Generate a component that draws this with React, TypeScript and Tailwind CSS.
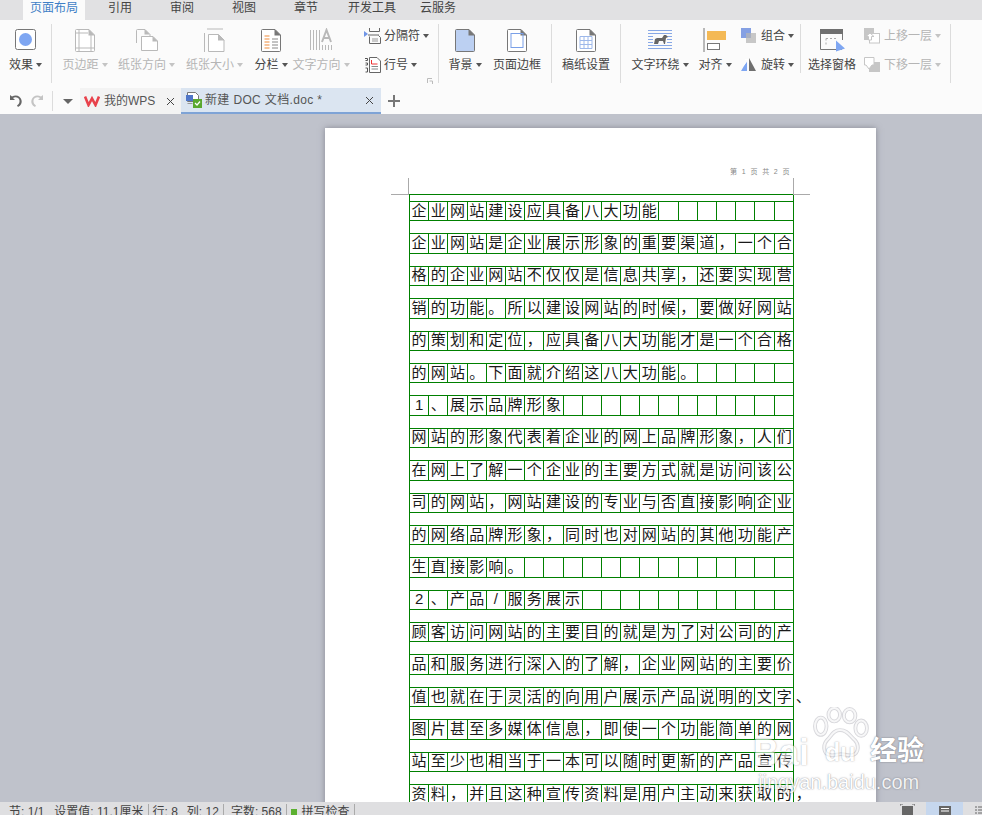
import React from "react";

const FONT = '"Liberation Sans","Noto Sans CJK SC",sans-serif';

const LINES = [
  "企业网站建设应具备八大功能",
  "企业网站是企业展示形象的重要渠道，一个合",
  "格的企业网站不仅仅是信息共享，还要实现营",
  "销的功能。所以建设网站的时候，要做好网站",
  "的策划和定位，应具备八大功能才是一个合格",
  "的网站。下面就介绍这八大功能。",
  "1、展示品牌形象",
  "网站的形象代表着企业的网上品牌形象，人们",
  "在网上了解一个企业的主要方式就是访问该公",
  "司的网站，网站建设的专业与否直接影响企业",
  "的网络品牌形象，同时也对网站的其他功能产",
  "生直接影响。",
  "2、产品/服务展示",
  "顾客访问网站的主要目的就是为了对公司的产",
  "品和服务进行深入的了解，企业网站的主要价",
  "值也就在于灵活的向用户展示产品说明的文字、",
  "图片甚至多媒体信息，即使一个功能简单的网",
  "站至少也相当于一本可以随时更新的产品宣传",
  "资料，并且这种宣传资料是用户主动来获取的，",
];

function Caret({ off }: { off?: boolean }) {
  return (
    <svg width="6" height="4" viewBox="0 0 6 4" className="ml-[3px] shrink-0">
      <path d="M0 0h6L3 4z" fill={off ? "#c4c4c4" : "#555"} />
    </svg>
  );
}

function Page({ stroke = "#777", fill = "#fff", children }: { stroke?: string; fill?: string; children?: React.ReactNode }) {
  return (
    <svg width="22" height="25" viewBox="0 0 22 25">
      <path d="M1.500 2.500a1 1 0 0 1 1-1H15L20.500 7v15.500a1 1 0 0 1-1 1h-17a1 1 0 0 1-1-1z" fill={fill} stroke={stroke} />
      <path d="M14.500 1 21 7.500h-6.500z" fill={stroke} />
      {children}
    </svg>
  );
}

const G = "#b9b9b9";

const icons: Record<string, React.ReactNode> = {
  effect: (
    <svg width="22" height="22" viewBox="0 0 22 22">
      <rect x=".5" y=".5" width="20" height="20" rx="2" fill="#fff" stroke="#777" />
      <circle cx="10.500" cy="10.500" r="6.500" fill="#7ea6f2" />
    </svg>
  ),
  margin: (
    <Page stroke={G}>
      <path d="M5 1.500v22M17 7v16.500M1.500 5H14M1.500 20H20" stroke={G} fill="none" />
    </Page>
  ),
  orient: (
    <svg width="24" height="24" viewBox="0 0 24 24">
      <path d="M1.500 15V2.500a1 1 0 0 1 1-1H10l5 5V8" fill="none" stroke={G} />
      <path d="M9.500 1 15 6.500H9.500z" fill={G} />
      <path d="M6.500 8.500H18l4.500 4.500v9.500H6.500z" fill="#fff" stroke={G} />
      <path d="M17.500 8 23 13.500H17.500z" fill={G} />
    </svg>
  ),
  size: (
    <svg width="22" height="25" viewBox="0 0 22 25">
      <path d="M.5 5v19M3 1h16" stroke={G} fill="none" />
      <path d="M4.500 6.500h10l5.500 5.500v11.500H4.500z" fill="#fff" stroke={G} />
      <path d="M14 6l6.500 6.500H14z" fill={G} />
    </svg>
  ),
  cols: (
    <Page>
      <path d="M4.500 8h5M4.500 11h5M4.500 14h5M4.500 17h5M4.500 20h5" stroke="#ef8b3b" />
      <path d="M12 11h6M12 14h6M12 17h6M12 20h6" stroke="#888" />
    </Page>
  ),
  dir: (
    <svg width="24" height="24" viewBox="0 0 24 24">
      <path d="M1.500 2v20M4.500 2v20M7.500 2v20M10.500 2v20" stroke={G} />
      <path d="M13 14 17.500 2 22 14M14.500 10h6" stroke={G} strokeWidth="2" fill="none" />
      <path d="M13.500 17v5M16.500 17v5M19.500 17v5M22.500 17v5" stroke={G} />
    </svg>
  ),
  breaks: (
    <svg width="18" height="16" viewBox="0 0 18 16">
      <path d="M0 3 4 6 0 9z" fill="#6f95e6" />
      <path d="M5.500 0v3.500h10V0" stroke="#666" fill="none" />
      <path d="M4 7h11M5.500 8.500v7h11v-6l-2-2" stroke="#666" fill="none" />
      <path d="M8 11h6M8 13h6" stroke="#999" />
    </svg>
  ),
  lines: (
    <svg width="18" height="16" viewBox="0 0 18 16">
      <path d="M1 1.500h2.500v2H1.500M1.500 6h2v2h-2M1.500 11h2v4h-2" stroke="#555" fill="none" />
      <path d="M5.500 .5H13l3.500 3.500v11.500h-11z" fill="#fff" stroke="#666" />
      <path d="M7.500 3v4h6" stroke="#e33" fill="none" />
      <path d="M7.500 9.500h6.500M7.500 12h6.500" stroke="#888" />
    </svg>
  ),
  bg: <Page fill="#bcd0f2" />,
  border: (
    <Page>
      <rect x="5" y="5.500" width="12" height="14" fill="none" stroke="#7aa0e8" />
    </Page>
  ),
  paper: (
    <Page>
      <path d="M5 8.500h12v12H5zM5 12.500h12M5 16.500h12M9 8.500v12M13 8.500v12" fill="none" stroke="#9db8ea" />
    </Page>
  ),
  wrap: (
    <svg width="24" height="20" viewBox="0 0 24 20">
      <path d="M0 .5h24M0 3.500h24M0 6.500h5M19 6.500h5M0 9.500h5M19 9.500h5M0 12.500h5M19 12.500h5M0 15.500h24M0 18.500h24" stroke="#87a8e6" />
      <path d="M6 14l1-5 2-1h5l2-3h2l2 2-2 1-1 6h-1l-1-3h-4l-1 3z" fill="#666" />
    </svg>
  ),
  align: (
    <svg width="24" height="24" viewBox="0 0 24 24">
      <path d="M1 0v24" stroke="#777" />
      <rect x="4" y="3" width="19" height="9" fill="#f4b955" />
      <rect x="4.500" y="15.500" width="12" height="6" fill="#fff" stroke="#777" />
    </svg>
  ),
  group: (
    <svg width="16" height="16" viewBox="0 0 16 16">
      <rect x="0" y="0" width="10" height="10" fill="#85a0e3" />
      <rect x="5" y="5" width="10" height="10" fill="#b5b5b5" fillOpacity=".75" />
    </svg>
  ),
  rotate: (
    <svg width="16" height="16" viewBox="0 0 16 16">
      <path d="M0 14 6 4v10z" fill="#7ea6f2" />
      <path d="M8 1l7 13H8z" fill="#6f6f6f" />
      <path d="M2 9 7 3M4 2.500h3.500V6" stroke="#fff" fill="none" />
    </svg>
  ),
  pane: (
    <svg width="25" height="23" viewBox="0 0 25 23">
      <path d="M.5 4.500v16h21V17" fill="none" stroke="#777" />
      <path d="M0 0h23v5H0z" fill="#6f6f6f" />
      <path d="M22.500 5v6" stroke="#777" />
      <path d="M6 9.500h11M6 9.500v6" stroke="#aaa" strokeDasharray="2 2" fill="none" />
      <path d="M16 11.500 25 19.500 16 22.500z" fill="#7ea6f2" />
    </svg>
  ),
  up: (
    <svg width="16" height="16" viewBox="0 0 16 16">
      <path d="M0 0h10v7H4v5H0z" fill="#c6c6c6" />
      <rect x="5.500" y="5.500" width="10" height="9.500" fill="#fff" stroke="#c6c6c6" />
      <path d="M6 5l-4 3.500h2.500V12h3V8.500H10z" fill="#fff" stroke="#c6c6c6" />
    </svg>
  ),
  down: (
    <svg width="16" height="16" viewBox="0 0 16 16">
      <rect x="5" y="5" width="11" height="10" fill="#c6c6c6" />
      <path d="M.5.5h9.500V8h-2l-3 4-3-4H.5z" fill="#fff" stroke="#c6c6c6" />
    </svg>
  ),
};

function Big({ w, icon, label, caret, off }: { w: string; icon: string; label: string; caret?: boolean; off?: boolean }) {
  return (
    <div className={`${w} shrink-0 flex flex-col items-center pt-[7px]`}>
      <div className="h-[26px] flex items-center justify-center">{icons[icon]}</div>
      <div className={`mt-[3px] h-[18px] flex items-center whitespace-nowrap text-[12px] ${off ? "text-[#b5b5b5]" : "text-[#444]"}`}>
        {label}
        {caret && <Caret off={off} />}
      </div>
    </div>
  );
}

function Small({ icon, label, off }: { icon: string; label: string; off?: boolean }) {
  return (
    <div className={`h-[29px] flex items-center whitespace-nowrap text-[12px] ${off ? "text-[#b5b5b5]" : "text-[#444]"}`}>
      <span className="w-[20px] flex justify-start">{icons[icon]}</span>
      {label}
      <Caret off={off} />
    </div>
  );
}

function Sep({ short }: { short?: boolean }) {
  return <div className={`w-px shrink-0 bg-[#dcdcdc] mt-[4px] ${short ? "h-[49px]" : "h-[59px]"}`} />;
}

function Row({ text }: { text: string }) {
  const chars = Array.from(text);
  const cells = chars.concat(Array(Math.max(0, 20 - chars.length)).fill(""));
  return (
    <div className="flex w-[384px] h-[20.4px] mb-[12px] border-y border-[#008000] box-border">
      {cells.map((c, i) => (
        <div
          key={i}
          className={`w-[19.2px] shrink-0 h-full flex items-center justify-center pb-[2px] text-[15px] leading-none text-[#1a1a1a] ${
            i < 19 ? "border-r border-[#008000]" : ""
          }`}
        >
          {c}
        </div>
      ))}
    </div>
  );
}

export default function App() {
  return (
    <div className="w-[982px] h-[815px] overflow-hidden flex flex-col relative bg-[#bfc2cb]" style={{ fontFamily: FONT }}>
      {/* menu tabs */}
      <div className="h-[20px] shrink-0 bg-[#e1e1e3] flex text-[12px] leading-[17px] text-[#444]">
        <div className="ml-[23px] w-[62px] h-[20px] bg-[#fbfbfb] text-center text-[#3f7fc6]">页面布局</div>
        <span className="ml-[23px]">引用</span>
        <span className="ml-[38px]">审阅</span>
        <span className="ml-[38px]">视图</span>
        <span className="ml-[38px]">章节</span>
        <span className="ml-[30px]">开发工具</span>
        <span className="ml-[24px]">云服务</span>
      </div>

      {/* ribbon */}
      <div className="h-[66px] shrink-0 bg-[#fbfbfb] flex items-start">
        <Big w="w-[51px]" icon="effect" label="效果" caret />
        <Sep />
        <Big w="w-[66px]" icon="margin" label="页边距" caret off />
        <Big w="w-[57px]" icon="orient" label="纸张方向" caret off />
        <Big w="w-[79px]" icon="size" label="纸张大小" caret off />
        <Big w="w-[34px]" icon="cols" label="分栏" caret />
        <Big w="w-[66px]" icon="dir" label="文字方向" caret off />
        <div className="w-[84px] shrink-0 pl-[10px] pt-[1px] relative h-[66px]">
          <Small icon="breaks" label="分隔符" />
          <Small icon="lines" label="行号" />
          <svg width="6" height="6" viewBox="0 0 6 6" className="absolute left-[73px] top-[58px]">
            <path d="M.5 5V.5H5M2.500 3h3v3" stroke="#bbb" fill="none" />
          </svg>
        </div>
        <Sep />
        <Big w="w-[52px]" icon="bg" label="背景" caret />
        <Big w="w-[52px]" icon="border" label="页面边框" />
        <div className="w-[8px]" />
        <Sep />
        <Big w="w-[68px]" icon="paper" label="稿纸设置" />
        <Sep />
        <Big w="w-[78px]" icon="wrap" label="文字环绕" caret />
        <Big w="w-[32px]" icon="align" label="对齐" caret />
        <div className="w-[69px] shrink-0 pl-[10px] pt-[1px]">
          <Small icon="group" label="组合" />
          <Small icon="rotate" label="旋转" />
        </div>
        <Sep short />
        <Big w="w-[62px]" icon="pane" label="选择窗格" />
        <div className="w-[87px] shrink-0 pl-[1px] pt-[1px]">
          <Small icon="up" label="上移一层" off />
          <Small icon="down" label="下移一层" off />
        </div>
        <Sep />
      </div>

      {/* document tab bar */}
      <div className="h-[28px] shrink-0 bg-[#fbfbfb] flex items-end text-[12px] text-[#555]">
        <div className="w-[52px] h-[26px] flex items-center pl-[9px] gap-[7px]">
          <svg width="14" height="14" viewBox="0 0 14 14">
            <path d="M1 1v5h5L4 4c2.500-1.500 6-.5 6.500 2.500.3 2-.8 4-2.500 5l1 1.500c3-1.500 4.300-4.500 3.500-7C11.500 2 7 0 3 2.500z" fill="#666" />
          </svg>
          <svg width="14" height="14" viewBox="0 0 14 14">
            <path d="M13 1v5H8l2-2C7.500 2.500 4 3.500 3.500 6.500c-.3 2 .8 4 2.500 5L5 13C2 11.500.7 8.500 1.500 6 2.500 2 7 0 11 2.500z" fill="#c4c4c4" />
          </svg>
        </div>
        <div className="w-px h-[20px] bg-[#dcdcdc] mb-[3px]" />
        <div className="w-[27px] h-[26px] flex items-center pl-[10px]">
          <svg width="10" height="5" viewBox="0 0 10 5">
            <path d="M0 0h10L5 5z" fill="#666" />
          </svg>
        </div>
        <div className="w-[101px] h-[26px] bg-[#f3f3f3] flex items-center pl-[4px]">
          <svg width="16" height="12" viewBox="0 0 16 12" className="mr-[4px]">
            <path d="M1 1.500 4.500 10 8 3.500 11.500 10 15 1.500" fill="none" stroke="#e8414b" strokeWidth="2.600" />
          </svg>
          <span>我的WPS</span>
          <span className="ml-[11px] w-[9px]">
            <svg width="9" height="9" viewBox="0 0 9 9">
              <path d="M1 1l7 7M8 1 1 8" stroke="#444" />
            </svg>
          </span>
        </div>
        <div className="w-[200px] h-[26px] bg-[#dbe5f1] border-b-2 border-[#7ea3d6] flex items-center pl-[5px]">
          <svg width="16" height="16" viewBox="0 0 16 16" className="mr-[3px]">
            <path d="M1.500.5h8l3 3v6h-11z" fill="#fff" stroke="#777" />
            <rect x="0" y="3" width="7" height="6" fill="#4f76c8" />
            <path d="M1.500 11.500h5" stroke="#999" />
            <rect x="7" y="7" width="9" height="9" fill="#5aa82f" />
            <path d="M9 11l2 2 3-3.500" stroke="#fff" fill="none" strokeWidth="1.200" />
          </svg>
          <span className="tracking-[0.35px]">新建 DOC 文档.doc *</span>
          <svg width="9" height="9" viewBox="0 0 9 9" className="ml-auto mr-[7px]">
            <path d="M1 1l7 7M8 1 1 8" stroke="#444" />
          </svg>
        </div>
        <div className="h-[26px] flex items-center ml-[7px]">
          <svg width="12" height="12" viewBox="0 0 12 12">
            <path d="M6 0v12M0 6h12" stroke="#777" strokeWidth="2" />
          </svg>
        </div>
      </div>

      {/* document area */}
      <div className="flex-1 min-h-0 overflow-hidden bg-[#bfc2cb]">
        <div className="relative ml-[325px] mt-[14px] w-[551px] h-[720px] bg-white shadow-[0_0_6px_rgba(90,90,100,0.55)] pl-[84px] pt-[66px] overflow-visible">
          <div className="absolute left-[405px] top-[39px] text-[7px] leading-[10px] text-[#888] whitespace-nowrap tracking-[1.4px]">第 1 页 共 2 页</div>
          <div className="absolute left-[83px] top-[50px] w-px h-[16px] bg-[#aaa]" />
          <div className="absolute left-[66px] top-[66px] w-[18px] h-px bg-[#aaa]" />
          <div className="absolute left-[468px] top-[50px] w-px h-[16px] bg-[#aaa]" />
          <div className="absolute left-[468px] top-[66px] w-[17px] h-px bg-[#aaa]" />
          <div className="w-[385px] h-[700px] border-l border-r border-t border-[#008000] pt-[6px]">
            {LINES.map((t, i) => (
              <Row key={i} text={t} />
            ))}
          </div>
        </div>
      </div>

      {/* status bar */}
      <div className="h-[13px] shrink-0 bg-[#dfdfe1] flex items-start text-[12px] leading-[16px] text-[#444] overflow-hidden whitespace-pre pt-[2px] pl-[9px] relative">
        <span>节: 1/1</span>
        <span className="ml-[10px]">设置值: 11.1厘米</span>
        <span className="w-px h-[11px] bg-[#aaa] mx-[4px]" />
        <span>行: 8</span>
        <span className="ml-[9px]">列: 12</span>
        <span className="w-px h-[11px] bg-[#aaa] mx-[4px]" />
        <span className="ml-[3px]">字数: 568</span>
        <span className="w-px h-[11px] bg-[#aaa] mx-[4px]" />
        <span className="w-[6px] h-[6px] mt-[5px] mr-[5px] bg-[#5cb030]" />
        <span>拼写检查</span>
        <span className="w-px h-[11px] bg-[#aaa] mx-[4px]" />
        <div className="ml-auto flex items-start -mt-[2px]">
          <div className="w-[15px] h-[13px] mt-[2px] flex justify-center">
            <svg width="15" height="11" viewBox="0 0 15 11">
              <path d="M3 0H0v2M12 0h3v2" stroke="#666" fill="none" />
              <rect x="2" y="2" width="11" height="9" fill="#666" />
            </svg>
          </div>
          <div className="ml-[11px] w-[37px] h-[13px] bg-[#c6d7ee] flex justify-center pt-[4px]">
            <svg width="12" height="9" viewBox="0 0 12 9">
              <rect width="12" height="9" fill="#666" />
              <path d="M2 2.500h8M2 5h8" stroke="#fff" />
            </svg>
          </div>
          <div className="w-[19px] h-[13px] pl-[12px] pt-[4px]">
            <svg width="7" height="9" viewBox="0 0 7 9">
              <path d="M0 1h2M0 4h2M0 7h2M3 1h4M3 4h4M3 7h4" stroke="#666" />
            </svg>
          </div>
        </div>
      </div>

      {/* watermark */}
      <div className="absolute left-[752px] top-[706px] w-[180px] h-[96px] pointer-events-none text-white [text-shadow:0_0_1px_rgba(110,110,120,0.9),0_0_2px_rgba(110,110,120,0.5)]">
        <svg width="58" height="50" viewBox="0 0 60 52" className="absolute left-[59px] top-[1px]">
          <g fill="none" stroke="#d8d8dc" strokeWidth="4">
            <ellipse cx="10" cy="20" rx="6" ry="9" />
            <ellipse cx="24" cy="8" rx="6" ry="7" />
            <ellipse cx="40" cy="9" rx="6" ry="7" />
            <ellipse cx="52" cy="22" rx="6" ry="8" />
            <path d="M30 24c-7 0-9 6-13 10-5 5-5 15 3 16 5 1 7-1 11-1s7 2 12 1c7-2 7-11 2-16-5-4-7-10-15-10z" />
          </g>
          <g fill="none" stroke="#fff" strokeOpacity=".8" strokeWidth="2">
            <ellipse cx="10" cy="20" rx="6" ry="9" />
            <ellipse cx="24" cy="8" rx="6" ry="7" />
            <ellipse cx="40" cy="9" rx="6" ry="7" />
            <ellipse cx="52" cy="22" rx="6" ry="8" />
            <path d="M30 24c-7 0-9 6-13 10-5 5-5 15 3 16 5 1 7-1 11-1s7 2 12 1c7-2 7-11 2-16-5-4-7-10-15-10z" />
          </g>
        </svg>
        <div className="absolute left-[1px] top-[27px] text-[36px] leading-[40px] font-bold opacity-60">Bai</div>
        <div className="absolute left-[73px] top-[31px] text-[25px] leading-[30px] font-bold opacity-60">du</div>
        <div className="absolute left-[118px] top-[28px] text-[27px] leading-[34px] font-bold">经验</div>
        <div className="absolute left-[6px] top-[64px] text-[20px] leading-[24px] whitespace-nowrap opacity-80">jingyan.baidu.com</div>
      </div>
    </div>
  );
}
